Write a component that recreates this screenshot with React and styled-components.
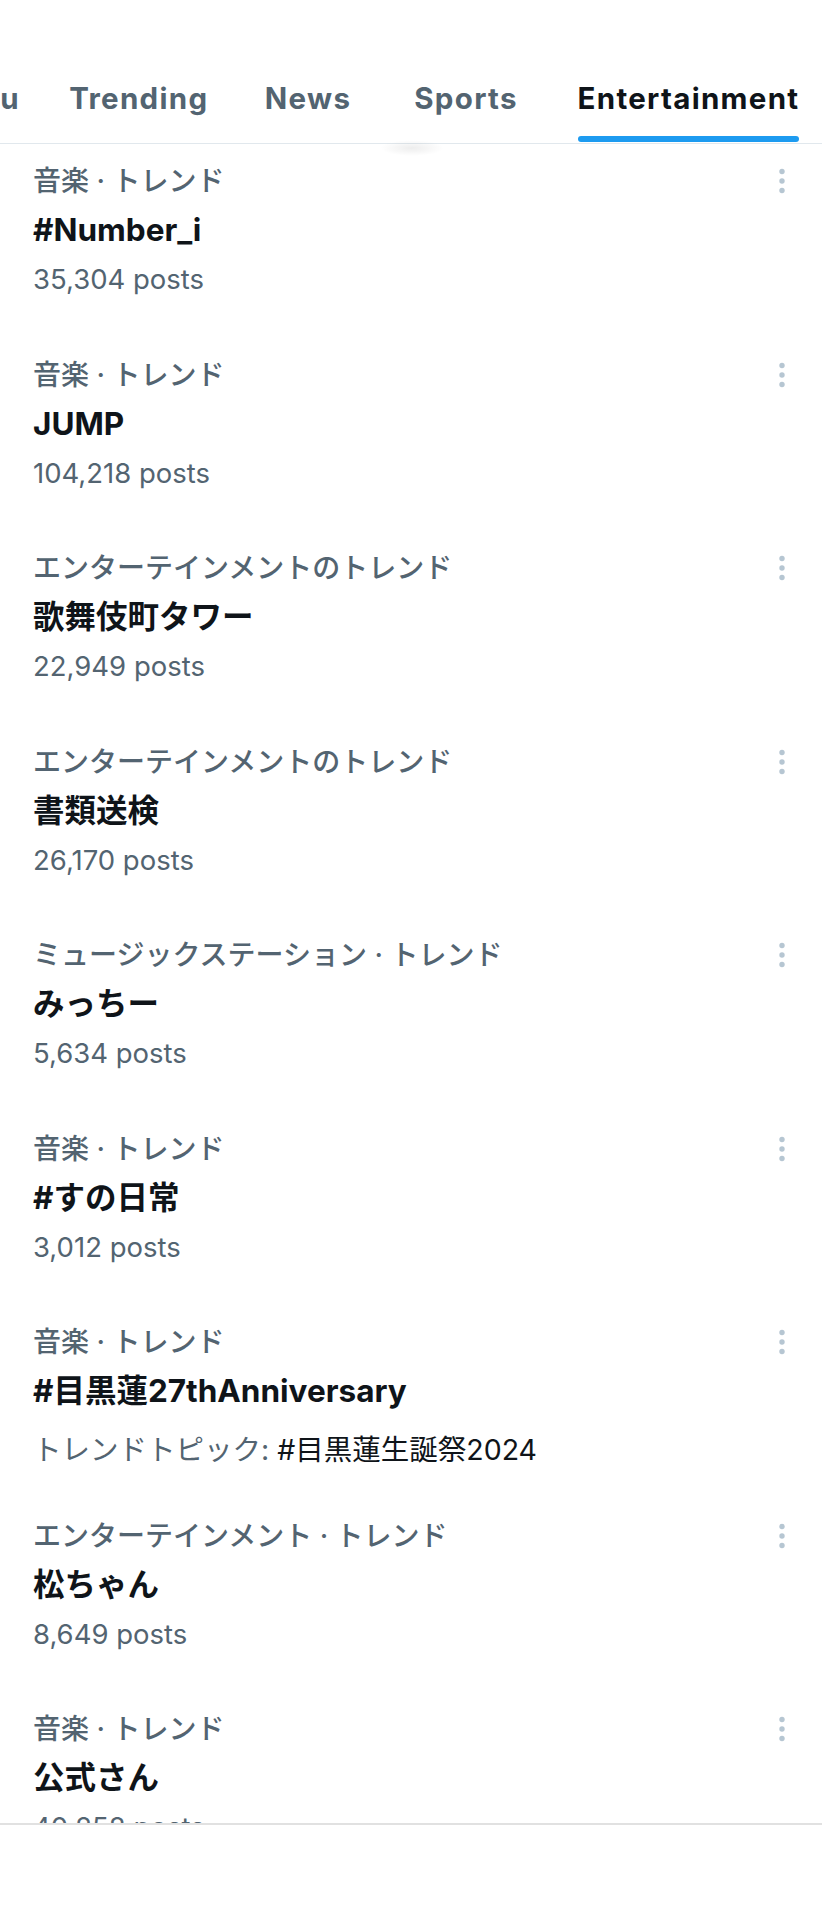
import React from "react";
import styled, { createGlobalStyle } from "styled-components";

const GlobalStyle = createGlobalStyle`
  html, body {
    margin: 0;
    padding: 0;
    background: #ffffff;
  }
  body {
    font-family: Inter, "Noto Sans CJK JP", sans-serif;
    -webkit-font-smoothing: antialiased;
  }
`;

const Screen = styled.div`
  width: 822px;
  height: 1920px;
  display: flex;
  flex-direction: column;
  overflow: hidden;
  background: #ffffff;
  position: relative;
`;

const Header = styled.div`
  height: 144px;
  flex-shrink: 0;
  border-bottom: 1px solid #e1e8ed;
  box-sizing: border-box;
  overflow: hidden;
`;

const TabStrip = styled.div`
  display: flex;
  height: 100%;
  margin-left: -120px;
`;

const Tab = styled.div`
  flex-shrink: 0;
  width: ${p => p.width}px;
  display: flex;
  justify-content: center;
  align-items: flex-end;
`;

const TabLabel = styled.div`
  display: flex;
  flex-direction: column;
  align-items: stretch;
  padding-bottom: 1px;
`;

const TabText = styled.span`
  font-size: 29.5px;
  line-height: 40px;
  font-weight: 700;
  letter-spacing: 1.3px;
  white-space: nowrap;
  color: ${p => (p.active ? "#0f1419" : "#536471")};
  margin-bottom: 18px;
`;

const Indicator = styled.div`
  height: 6px;
  border-radius: 3px;
  background: ${p => (p.active ? "#1d9bf0" : "transparent")};
`;

const ScrollShadow = styled.div`
  position: absolute;
  left: 380px;
  top: 140px;
  width: 64px;
  height: 16px;
  border-radius: 50%;
  background: radial-gradient(ellipse at center, rgba(0, 0, 0, 0.07) 0%, rgba(0, 0, 0, 0) 70%);
  pointer-events: none;
`;

const List = styled.div`
  flex: 1;
  overflow: hidden;
  border-bottom: 2px solid #e1e1e1;
`;

const Row = styled.div`
  height: 193.5px;
  box-sizing: border-box;
  padding: 13px 20px 0 33px;
  display: flex;
  align-items: flex-start;
`;

const RowBody = styled.div`
  flex: 1;
  display: flex;
  flex-direction: column;
`;

const Category = styled.div`
  font-size: 28px;
  line-height: 48px;
  font-weight: 500;
  color: #536471;
  white-space: nowrap;
`;

const Title = styled.div`
  font-size: 31.5px;
  line-height: 50px;
  font-weight: 700;
  color: #0f1419;
  white-space: nowrap;
`;

const Meta = styled.div`
  font-size: ${p => (p.topic ? "28.5px" : "27.5px")};
  line-height: 48px;
  color: #536471;
  white-space: nowrap;
  margin-top: ${p => (p.topic ? "10px" : "0")};
`;

const TopicName = styled.span`
  color: #0f1419;
  font-size: 28.5px;
`;

const MoreButton = styled.div`
  width: 40px;
  height: 48px;
  display: flex;
  align-items: center;
  justify-content: center;
  flex-shrink: 0;
`;

const Footer = styled.div`
  height: 95px;
  flex-shrink: 0;
  background: #ffffff;
`;

const tabs = [
  { label: "For you", width: 163.5 },
  { label: "Trending", width: 190.5 },
  { label: "News", width: 148 },
  { label: "Sports", width: 168 },
  { label: "Entertainment", width: 277, active: true },
];

const trends = [
  { category: "音楽 · トレンド", title: "#Number_i", posts: "35,304 posts" },
  { category: "音楽 · トレンド", title: "JUMP", posts: "104,218 posts" },
  { category: "エンターテインメントのトレンド", title: "歌舞伎町タワー", posts: "22,949 posts" },
  { category: "エンターテインメントのトレンド", title: "書類送検", posts: "26,170 posts" },
  { category: "ミュージックステーション · トレンド", title: "みっちー", posts: "5,634 posts" },
  { category: "音楽 · トレンド", title: "#すの日常", posts: "3,012 posts" },
  { category: "音楽 · トレンド", title: "#目黒蓮27thAnniversary", topic: "#目黒蓮生誕祭2024" },
  { category: "エンターテインメント · トレンド", title: "松ちゃん", posts: "8,649 posts" },
  { category: "音楽 · トレンド", title: "公式さん", posts: "40,258 posts" },
];

const MoreIcon = () => (
  <svg width="8" height="26" viewBox="0 0 8 26">
    <circle cx="4" cy="3.5" r="2.7" fill="#b6c6d2" />
    <circle cx="4" cy="13" r="2.7" fill="#b6c6d2" />
    <circle cx="4" cy="22.5" r="2.7" fill="#b6c6d2" />
  </svg>
);

const TrendRow = ({ trend }) => (
  <Row>
    <RowBody>
      <Category>{trend.category}</Category>
      <Title>{trend.title}</Title>
      {trend.topic ? (
        <Meta topic>
          トレンドトピック: <TopicName>{trend.topic}</TopicName>
        </Meta>
      ) : (
        <Meta>{trend.posts}</Meta>
      )}
    </RowBody>
    <MoreButton>
      <MoreIcon />
    </MoreButton>
  </Row>
);

export default function App() {
  return (
    <Screen>
      <GlobalStyle />
      <Header>
        <TabStrip>
          {tabs.map(tab => (
            <Tab key={tab.label} width={tab.width}>
              <TabLabel>
                <TabText active={tab.active}>{tab.label}</TabText>
                <Indicator active={tab.active} />
              </TabLabel>
            </Tab>
          ))}
        </TabStrip>
      </Header>
      <ScrollShadow />
      <List>
        {trends.map(trend => (
          <TrendRow key={trend.title} trend={trend} />
        ))}
      </List>
      <Footer />
    </Screen>
  );
}
